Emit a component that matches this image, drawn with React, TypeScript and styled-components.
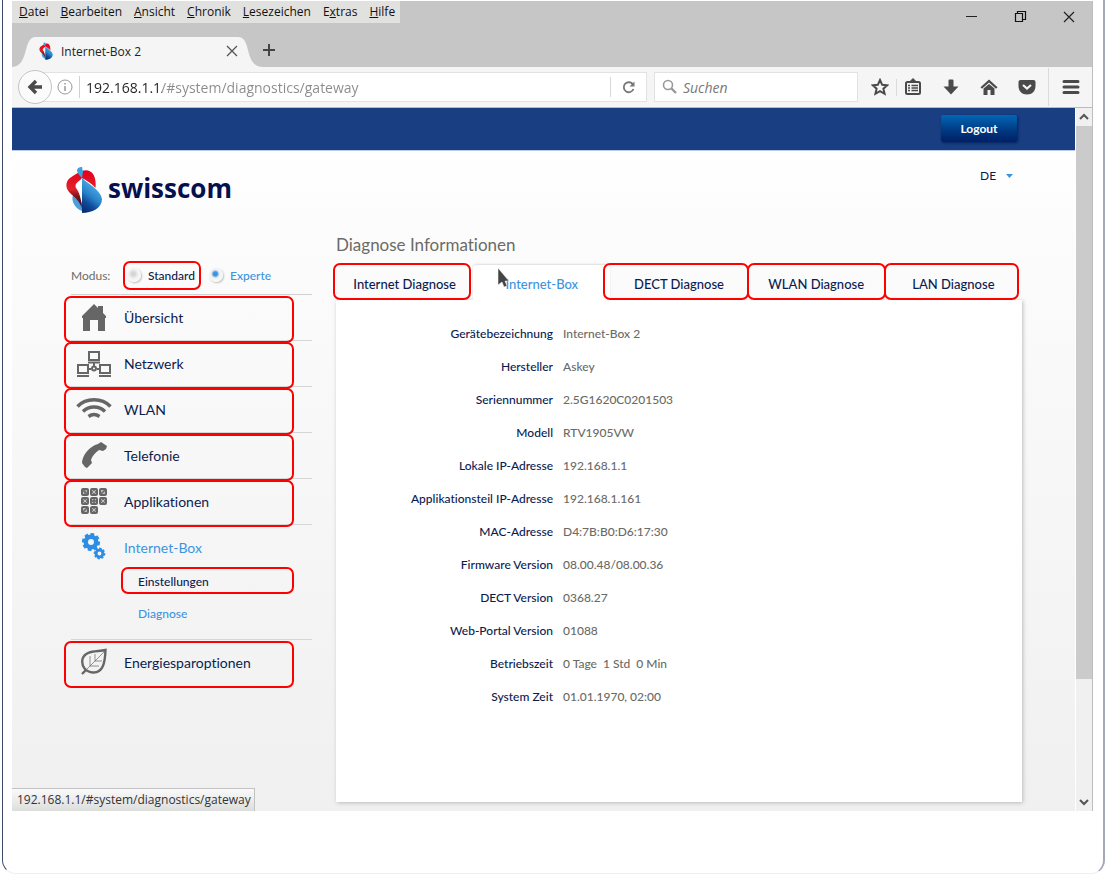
import React from "react";
import styled, { createGlobalStyle, css } from "styled-components";

const chromeFont = `"Open Sans", "Noto Sans", sans-serif`;
const pageFont = `Lato, "Open Sans", sans-serif`;
const navy = "#0c1c50";
const sky = "#3d94e0";
const grey = "#6b6b66";
const ink = "#4a4a4a";

const Global = createGlobalStyle`
  *, *::before, *::after { box-sizing: border-box; }
  body { margin: 0; background: #fff; font-family: ${chromeFont}; }
  button, input, select { font: inherit; color: inherit; margin: 0; }
  button { border: 0; background: none; padding: 0; cursor: pointer; }
  a { color: inherit; text-decoration: none; }
  ul { list-style: none; margin: 0; padding: 0; }
`;

/* Red call-out drawn over a clickable part */
const marked = css`
  position: relative;
  &::after {
    content: "";
    position: absolute;
    inset: var(--mark);
    border: 2px solid #f00;
    border-radius: 7px;
    pointer-events: none;
    z-index: 1;
  }
`;

const Frame = styled.div`
  min-height: 100vh;
  margin: 0 12px 0 2px;
  padding: 1px 10px 0 9px;
  border: 1px solid #3f4a66;
  border-right: 2px solid #a5a8b6;
  border-top: 0;
  border-bottom-color: #eee;
  border-radius: 0 0 14px 14px;
`;

const Browser = styled.div`
  position: relative;
  border-right: 1px solid #bdbdbd;
`;

const TitleBar = styled.header`
  background: #c6c6c6;
`;

const TitleRow = styled.div`
  display: flex;
  justify-content: space-between;
  align-items: flex-start;
  height: 36px;
`;

const MenuBar = styled.nav`
  display: flex;
  gap: 12px;
  height: 22px;
  padding: 0 5px 0 7px;
  background: #e1e2e0;
  font-size: 12px;
  line-height: 22px;
  color: #111;
`;

const WindowButtons = styled.div`
  display: flex;
  gap: 33px;
  padding: 7px 15px 0 0;
  svg { display: block; }
`;

const TabStrip = styled.div`
  display: flex;
  height: 30px;
`;

const Curve = styled.svg`
  display: block;
  width: 24px;
  height: 30px;
  flex: none;
`;

const BrowserTab = styled.div`
  display: flex;
  align-items: center;
  width: 202px;
  padding: 0 0 2px 3px;
  background: #f5f5f5;
  font-size: 12px;
  color: #222;
  svg { display: block; }
  span { flex: 1; padding-left: 8px; }
`;

const NewTab = styled.button`
  padding: 0 0 2px 0;
  width: 14px;
`;

const Toolbar = styled.div`
  display: flex;
  align-items: center;
  height: 41px;
  padding-left: 6px;
  background: #f5f5f5;
  border-bottom: 1px solid #b9bcc4;
`;

const BackButton = styled.button`
  display: grid;
  place-items: center;
  flex: none;
  width: 34px;
  height: 34px;
  border: 1px solid #c4c4c4;
  border-radius: 50%;
  background: #fbfbfb;
  z-index: 1;
`;

const AddressBar = styled.div`
  display: flex;
  align-items: center;
  flex: 1;
  height: 30px;
  margin-left: -18px;
  padding-left: 22px;
  border: 1px solid #e2e2e2;
  background: #fff;
`;

const UrlInput = styled.input`
  flex: 1;
  min-width: 0;
  height: 22px;
  margin-left: 6px;
  padding: 0 0 0 6px;
  border: 0;
  border-left: 1px solid #d0d0d0;
  outline: 0;
  font-size: 14px;
  background: linear-gradient(90deg, #222 82px, #8a8a8a 82px);
  -webkit-background-clip: text;
  background-clip: text;
  -webkit-text-fill-color: transparent;
`;

const ReloadButton = styled.button`
  display: grid;
  place-items: center;
  width: 36px;
  height: 20px;
  border-left: 1px solid #d8d8d8;
`;

const SearchBox = styled.label`
  display: flex;
  align-items: center;
  width: 204px;
  height: 30px;
  margin-left: 7px;
  padding-left: 7px;
  gap: 6px;
  border: 1px solid #e2e2e2;
  background: #fff;
  input {
    width: 150px;
    padding: 0;
    border: 0;
    outline: 0;
    font-size: 14px;
    font-style: italic;
  }
  input::placeholder { color: #777; opacity: 1; }
`;

const Tools = styled.div`
  display: flex;
  align-items: center;
  padding-left: 13px;
  color: ${ink};
  svg { display: block; }
`;

const Tool = styled.button<{ $gap: number }>`
  width: 18px;
  margin-right: ${(p) => p.$gap}px;
`;

const Divider = styled.i<{ $h: number }>`
  width: 1px;
  height: ${(p) => p.$h}px;
  margin-right: ${(p) => (p.$h > 20 ? 13 : 7)}px;
  background: #dadada;
`;

const Viewport = styled.div`
  display: flex;
  gap: 1px;
`;

const Page = styled.div`
  flex: 1;
  min-width: 0;
  font-family: ${pageFont};
  font-variant-ligatures: none;
  background: linear-gradient(#fff 43px, #fcfcfc 120px, #f0f0f0 100%);
`;

const ScrollBar = styled.div`
  display: flex;
  flex-direction: column;
  width: 16px;
  background: #f0f0f0;
  svg { display: block; margin: 0 auto; }
`;

const ScrollEnd = styled.button`
  height: 18px;
  flex: none;
`;

const ScrollThumb = styled.div`
  height: 553px;
  margin-bottom: auto;
  background: #cbcbcb;
`;

const TopBar = styled.div`
  display: flex;
  justify-content: flex-end;
  align-items: flex-start;
  height: 43px;
  padding: 7px 58px 0 0;
  background: #193f82;
  border-bottom: 1px solid #b9cbe8;
`;

const Logout = styled.button`
  width: 76px;
  height: 27px;
  border-radius: 2px;
  background: linear-gradient(#0067b5, #003780 60%, #001f66);
  box-shadow: 1px 1px 3px #061f5c;
  color: #fff;
  font-size: 12px;
  font-weight: 700;
`;

const Brand = styled.div`
  display: flex;
  justify-content: space-between;
  align-items: flex-start;
  padding: 15px 62px 0 54px;
`;

const Logo = styled.a`
  display: flex;
  align-items: flex-start;
  gap: 6px;
  color: #06104f;
  font-family: ${chromeFont};
  font-size: 26px;
  font-weight: 700;
  line-height: 44px;
`;

const Language = styled.label`
  display: flex;
  align-items: center;
  padding-top: 2px;
  font-size: 12px;
  color: ${navy};
  select {
    appearance: none;
    width: 26px;
    padding: 0;
    border: 0;
    background: none;
    outline: 0;
  }
`;

const Columns = styled.div`
  display: flex;
  gap: 24px;
  padding: 20px 53px 9px 59px;
`;

const Sidebar = styled.nav`
  flex: none;
  width: 241px;
  padding-top: 26px;
  color: ${navy};
`;

const Modus = styled.div`
  display: flex;
  align-items: center;
  height: 30px;
  margin-bottom: 4px;
  font-size: 12px;
`;

const ModusLabel = styled.span`
  width: 56px;
  color: ${grey};
`;

const Choice = styled.label<{ $on?: boolean }>`
  display: flex;
  align-items: center;
  gap: 7px;
  margin-right: 14px;
  font-weight: 500;
  color: ${(p) => (p.$on ? sky : navy)};
  --mark: -7px -6px -7px -4px;
  ${(p) => !p.$on && marked}
  input {
    appearance: none;
    width: 14px;
    height: 14px;
    margin: 0;
    border-radius: 50%;
    background: radial-gradient(circle at 45% 42%, #d6d6d6 2px, #ececec 4px, #f6f6f6 6px);
    box-shadow: 1px 1px 2px #bbb;
  }
  input:checked {
    background: radial-gradient(circle at 45% 42%, ${sky} 2px, #ececec 4px, #f6f6f6 6px);
  }
`;

const NavList = styled.ul`
  border-top: 1px solid #d0d0d0;
  > li { border-bottom: 1px solid #d6d6d6; }
  > li:last-child { border-bottom: 0; }
`;

const NavLink = styled.a<{ $active?: boolean }>`
  display: flex;
  align-items: center;
  height: 45px;
  font-size: 14px;
  color: ${(p) => (p.$active ? sky : navy)};
  --mark: 1px 18px -3px -7px;
  ${(p) => !p.$active && marked}
`;

const NavIcon = styled.span<{ $active?: boolean }>`
  display: grid;
  place-items: center;
  width: 46px;
  margin-right: 7px;
  color: ${(p) => (p.$active ? "#2c8ee6" : "#666")};
`;

const SubList = styled.ul`
  margin-top: -4px;
  padding-bottom: 9px;
`;

const SubLink = styled.a<{ $active?: boolean }>`
  display: block;
  padding-left: 67px;
  line-height: 32px;
  font-size: 12px;
  font-weight: 500;
  color: ${(p) => (p.$active ? sky : navy)};
  --mark: 1px 18px 4px 50px;
  ${(p) => !p.$active && marked}
`;

const Content = styled.main`
  flex: 1;
  min-width: 0;
`;

const Heading = styled.h1`
  margin: 0 0 9px;
  font-size: 17px;
  font-weight: 400;
  line-height: 22px;
  color: ${grey};
`;

const Tabs = styled.div`
  display: flex;
  height: 35px;
`;

const Tab = styled.button<{ $active?: boolean }>`
  flex: 1;
  position: relative;
  padding-top: 3px;
  font-size: 13px;
  font-weight: 500;
  color: ${(p) => (p.$active ? sky : navy)};
  ${(p) =>
    p.$active
      ? css`
          background: #fff;
          border-radius: 3px 3px 0 0;
          box-shadow: 0 -1px 2px #ddd;
        `
      : marked}
  --mark: -2px -1px 0 -1px;
  &:first-child { --mark: -2px 2px 0 -3px; }
  &:nth-child(3) { --mark: -2px -1px 0 -7px; }
  &:last-child { --mark: -2px 3px 0 -1px; }
`;

const Pointer = styled.svg`
  position: absolute;
  left: 24px;
  top: 2px;
`;

const Panel = styled.section`
  min-height: 502px;
  padding-top: 17px;
  background: #fff;
  box-shadow: 1px 1px 4px #bbb;
`;

const Facts = styled.table`
  border-collapse: collapse;
  font-size: 12px;
  th, td { height: 33px; padding: 0; font-weight: 500; }
  th { width: 217px; text-align: right; color: ${navy}; white-space: nowrap; }
  td { padding-left: 10px; color: ${grey}; white-space: pre; }
`;

const StatusTip = styled.div`
  position: absolute;
  left: 0;
  bottom: 0;
  height: 23px;
  padding: 0 3px 0 5px;
  border: 1px solid #c3c3c3;
  border-width: 1px 1px 0 0;
  background: linear-gradient(#fafafa, #dcdedc);
  font-size: 12px;
  line-height: 22px;
  color: #333;
`;

const Emblem = ({ width, height }: { width: number; height: number }) => (
  <svg width={width} height={height} viewBox="0 0 36 48" aria-hidden="true">
    <defs>
      <linearGradient id="drop" x1="0.7" y1="0.1" x2="0.3" y2="1">
        <stop offset="0" stopColor="#55b5ea" />
        <stop offset="0.5" stopColor="#2a82c9" />
        <stop offset="0.75" stopColor="#0f4c9a" />
        <stop offset="1" stopColor="#0a2f7a" />
      </linearGradient>
      <linearGradient id="heart" x1="0" y1="0" x2="0" y2="1">
        <stop offset="0" stopColor="#e2001a" />
        <stop offset="0.5" stopColor="#e3222a" />
        <stop offset="0.7" stopColor="#7a1518" />
        <stop offset="1" stopColor="#2a1020" />
      </linearGradient>
    </defs>
    <path d="M7 29 C5 34 8 42 16 45 V37 C13 33 11 31 7 29Z" fill="#4a9fdc" />
    <path d="M16 5 C24 2 31 8 29.500 22 C25 17 20 14 16 12 C13 16 8 17 10 22 C13 26 15 31 16 42 C13 35 10 32 5 28 C-2 22 0 15 4 12 C8 9 11 7 16 5Z" fill="url(#heart)" />
    <path d="M16 12 C21 17 35 24 36 33 C36 42 26 47 16 47Z" fill="url(#drop)" />
    <path d="M11 5 C11 2 13 1 16 1 L17 6 L16 12 C14 10 12 8 11 5Z" fill="#3aa3df" />
  </svg>
);

const HouseIcon = () => (
  <svg width="26" height="28" viewBox="0 0 26 28" fill="currentColor">
    <path d="M13 0 L17 4 V2 H22 V9 L25 12 V14 H24 V27 H17 V16 H9 V27 H2 V14 H1 V12Z" />
  </svg>
);

const NetworkIcon = () => (
  <svg width="36" height="28" viewBox="0 0 36 28" fill="none" stroke="currentColor" strokeWidth="2">
    <rect x="13" y="2" width="10" height="8" />
    <path d="M12 12.500H24M18 13V16M1 26H13M23 26H35M12 19H15M21 19H24" />
    <circle cx="18" cy="18.500" r="2" />
    <rect x="2" y="15" width="10" height="8" />
    <rect x="24" y="15" width="10" height="8" />
  </svg>
);

const WifiIcon = () => (
  <svg width="36" height="26" viewBox="0 0 36 26" fill="none" stroke="currentColor" strokeWidth="3.400">
    <path d="M1.500 9.500 C10 0.500 26 0.500 34.500 9.500" />
    <path d="M7 14.500 C13 8.500 23 8.500 29 14.500" />
    <path d="M12.500 19.500 C16 17 20 17 23.500 19.500" />
  </svg>
);

const PhoneIcon = () => (
  <svg width="26" height="28" viewBox="0 0 26 28" fill="currentColor">
    <path d="M17 2 L20 0 L26 4 L25 7 L22 9 L18 8 C14 11 11 14 10 18 L11 21 L6 26 L4 25 L1 21 C1 13 9 4 17 2Z" />
  </svg>
);

const AppsIcon = () => (
  <svg width="26" height="28" viewBox="0 0 26 28">
    {[0, 1, 2, 3, 4, 5, 6, 7].map((i) => (
      <g key={i} transform={`translate(${(i % 3) * 9} ${Math.floor(i / 3) * 9})`}>
        <rect x="1" y="1" width="6" height="6" rx="1" fill="#bbb" stroke="currentColor" strokeWidth="2" />
        {i % 2 ? (
          <circle cx="4" cy="4" r="1.500" fill="#eee" stroke="currentColor" strokeWidth="1" />
        ) : (
          <path d={i === 4 ? "M4 2V6M2 4H6" : i === 2 || i === 6 ? "M2 6L6 2" : "M2 3H4V5H6"} fill="none" stroke="currentColor" strokeWidth="1.500" />
        )}
      </g>
    ))}
  </svg>
);

const Gear = ({ x, y, r }: { x: number; y: number; r: number }) => (
  <g transform={`translate(${x} ${y})`}>
    <circle r={r * 0.58} fill="none" stroke="currentColor" strokeWidth={r * 0.5} />
    {[0, 45, 90, 135, 180, 225, 270, 315].map((a) => (
      <rect key={a} x={-r * 0.21} y={-r} width={r * 0.42} height={r * 0.35} fill="currentColor" transform={`rotate(${a + 10})`} />
    ))}
  </g>
);

const GearsIcon = () => (
  <svg width="26" height="30" viewBox="0 0 26 30">
    <Gear x={10} y={9} r={9} />
    <Gear x={18.5} y={20.5} r={5.8} />
  </svg>
);

const LeafIcon = () => (
  <svg width="26" height="30" viewBox="0 0 26 30" fill="none" stroke="currentColor">
    <path d="M24.500 2 C16 4 4 2 1.500 11 C0 19 5 24 12 24.500 C22 25 24 15 24.500 2Z" strokeWidth="2.400" />
    <path d="M1 26 L5 22" strokeWidth="2.400" />
    <path d="M5 22 L24 3 M9 18V8 M14 13V6 M9 18 H18 M14 13 H21" strokeWidth="1" opacity="0.7" />
  </svg>
);

const navItems = [
  { label: "Übersicht", icon: <HouseIcon /> },
  { label: "Netzwerk", icon: <NetworkIcon /> },
  { label: "WLAN", icon: <WifiIcon /> },
  { label: "Telefonie", icon: <PhoneIcon /> },
  { label: "Applikationen", icon: <AppsIcon /> },
  { label: "Internet-Box", icon: <GearsIcon />, active: true, sub: ["Einstellungen", "Diagnose"] },
  { label: "Energiesparoptionen", icon: <LeafIcon /> },
];

const tabs = ["Internet Diagnose", "Internet-Box", "DECT Diagnose", "WLAN Diagnose", "LAN Diagnose"];

const facts = [
  ["Gerätebezeichnung", "Internet-Box 2"],
  ["Hersteller", "Askey"],
  ["Seriennummer", "2.5G1620C0201503"],
  ["Modell", "RTV1905VW"],
  ["Lokale IP-Adresse", "192.168.1.1"],
  ["Applikationsteil IP-Adresse", "192.168.1.161"],
  ["MAC-Adresse", "D4:7B:B0:D6:17:30"],
  ["Firmware Version", "08.00.48/08.00.36"],
  ["DECT Version", "0368.27"],
  ["Web-Portal Version", "01088"],
  ["Betriebszeit", "0 Tage  1 Std  0 Min"],
  ["System Zeit", "01.01.1970, 02:00"],
];

const menus = [
  ["", "D", "atei"],
  ["", "B", "earbeiten"],
  ["", "A", "nsicht"],
  ["", "C", "hronik"],
  ["", "L", "esezeichen"],
  ["E", "x", "tras"],
  ["", "H", "ilfe"],
];

const BrowserChrome = () => (
  <>
    <TitleBar>
      <TitleRow>
        <MenuBar>
          {menus.map(([before, key, after]) => (
            <a href="#menu" key={key}>
              {before}
              <u>{key}</u>
              {after}
            </a>
          ))}
        </MenuBar>
        <WindowButtons>
          <button aria-label="Minimieren">
            <svg width="16" height="16" viewBox="0 0 16 16"><path d="M3 8.500H14" stroke="#222" /></svg>
          </button>
          <button aria-label="Wiederherstellen">
            <svg width="16" height="16" viewBox="0 0 16 16" fill="none" stroke="#111" strokeWidth="1.200">
              <path d="M3.500 5.500H10.500V13.500H3.500ZM5.500 5.500V3.500H13.500V11.500H10.500" />
            </svg>
          </button>
          <button aria-label="Schliessen">
            <svg width="16" height="16" viewBox="0 0 16 16"><path d="M3 4L13 14M13 4L3 14" stroke="#222" strokeWidth="1.200" /></svg>
          </button>
        </WindowButtons>
      </TitleRow>
      <TabStrip>
        <Curve viewBox="0 0 24 30"><path d="M0 30 C18 29 10 0 24 0 V30Z" fill="#f5f5f5" /></Curve>
        <BrowserTab>
          <Emblem width={14} height={18} />
          <span>Internet-Box 2</span>
          <button aria-label="Tab schliessen">
            <svg width="12" height="12" viewBox="0 0 12 12"><path d="M1 1L11 11M11 1L1 11" stroke="#555" strokeWidth="1.300" /></svg>
          </button>
        </BrowserTab>
        <Curve viewBox="0 0 24 30"><path d="M24 30 C6 29 14 0 0 0 V30Z" fill="#f5f5f5" /></Curve>
        <NewTab aria-label="Neuer Tab">
          <svg width="14" height="14" viewBox="0 0 14 14"><path d="M7 1V13M1 7H13" stroke="#444" strokeWidth="2" /></svg>
        </NewTab>
      </TabStrip>
    </TitleBar>
    <Toolbar>
      <BackButton aria-label="Zurück">
        <svg width="16" height="16" viewBox="0 0 16 16" fill="none" stroke={ink} strokeWidth="3.400"><path d="M9 2L3 8L9 14M3 8H15" /></svg>
      </BackButton>
      <AddressBar>
        <svg width="16" height="16" viewBox="0 0 16 16" fill="none" stroke="#999">
          <circle cx="8" cy="8" r="7" />
          <path d="M8 7V12M8 4V5.500" strokeWidth="1.500" />
        </svg>
        <UrlInput aria-label="Adresse" defaultValue="192.168.1.1/#system/diagnostics/gateway" />
        <ReloadButton aria-label="Neu laden">
          <svg width="14" height="14" viewBox="0 0 14 14" fill="none" stroke="#777" strokeWidth="1.800">
            <path d="M11 4.500A5 5 0 1 0 11.500 9" />
            <path d="M12.500 1.500V6.500H7.500Z" fill="#777" stroke="none" />
          </svg>
        </ReloadButton>
      </AddressBar>
      <SearchBox>
        <svg width="15" height="16" viewBox="0 0 15 16" fill="none" stroke="#999">
          <circle cx="6" cy="6" r="4.500" strokeWidth="1.600" />
          <path d="M9.500 9.500L14 14" strokeWidth="2.400" />
        </svg>
        <input placeholder="Suchen" aria-label="Suchen" />
      </SearchBox>
      <Tools>
        <Tool $gap={7} aria-label="Lesezeichen setzen">
          <svg width="18" height="18" viewBox="0 0 18 18" fill="none" stroke="currentColor" strokeWidth="2">
            <path d="M9 2L11.200 6.800L16.200 7.300L12.400 10.700L13.600 15.800L9 13.100L4.400 15.800L5.600 10.700L1.800 7.300L6.800 6.800Z" />
          </svg>
        </Tool>
        <Divider $h={17} />
        <Tool $gap={20} aria-label="Lesezeichen anzeigen">
          <svg width="18" height="18" viewBox="0 0 18 18" fill="none" stroke="currentColor">
            <rect x="2" y="4" width="14" height="12" rx="1.500" strokeWidth="2" />
            <path d="M5.500 4L9 0.500L12.500 4Z" fill="currentColor" />
            <path d="M4 7.500H6M7.500 7.500H14M4 10H6M7.500 10H14M4 12.500H6M7.500 12.500H14" strokeWidth="1.300" />
          </svg>
        </Tool>
        <Tool $gap={20} aria-label="Downloads">
          <svg width="18" height="18" viewBox="0 0 18 18" fill="currentColor">
            <path d="M6.500 2.500Q6.500 1.500 7.500 1.500H10.500Q11.500 1.500 11.500 2.500V8.500H16.500L9 16.500L1.500 8.500H6.500Z" />
          </svg>
        </Tool>
        <Tool $gap={20} aria-label="Startseite">
          <svg width="18" height="18" viewBox="0 0 18 18" fill="currentColor">
            <path d="M9 1.500L17.500 9.200L16 10.700L9 4.400L2 10.700L0.500 9.200Z" />
            <path d="M9 6L14.500 10.500V17H10.500V12H7.500V17H3.500V10.500Z" />
          </svg>
        </Tool>
        <Tool $gap={12} aria-label="Pocket">
          <svg width="18" height="18" viewBox="0 0 18 18">
            <path d="M2.500 2H15.500C17 2 17.500 3 17.500 4V8C17.500 13 14 16.500 9 16.500S0.500 13 0.500 8V4C0.500 3 1 2 2.500 2Z" fill="currentColor" />
            <path d="M5 7L9 10.500L13 7" fill="none" stroke="#f5f5f5" strokeWidth="2.200" />
          </svg>
        </Tool>
        <Divider $h={38} />
        <Tool $gap={12} aria-label="Menü">
          <svg width="18" height="18" viewBox="0 0 18 18">
            <path d="M2 3.500H16M2 9H16M2 14.500H16" stroke="currentColor" strokeWidth="3" strokeLinecap="round" />
          </svg>
        </Tool>
      </Tools>
    </Toolbar>
  </>
);

export default function App() {
  return (
    <Frame>
      <Global />
      <Browser>
        <BrowserChrome />
        <Viewport>
          <Page>
            <TopBar>
              <Logout>Logout</Logout>
            </TopBar>
            <Brand>
              <Logo href="#home">
                <Emblem width={36} height={48} />
                swisscom
              </Logo>
              <Language>
                <select aria-label="Sprache" defaultValue="DE">
                  <option>DE</option>
                </select>
                <svg width="7" height="4" viewBox="0 0 7 4"><path d="M0 0H7L3.500 4Z" fill={sky} /></svg>
              </Language>
            </Brand>
            <Columns>
              <Sidebar>
                <Modus role="radiogroup" aria-label="Modus">
                  <ModusLabel>Modus:</ModusLabel>
                  <Choice>
                    <input type="radio" name="modus" />
                    Standard
                  </Choice>
                  <Choice $on>
                    <input type="radio" name="modus" defaultChecked />
                    Experte
                  </Choice>
                </Modus>
                <NavList>
                  {navItems.map((item) => (
                    <li key={item.label}>
                      <NavLink href="#nav" $active={item.active}>
                        <NavIcon $active={item.active}>{item.icon}</NavIcon>
                        {item.label}
                      </NavLink>
                      {item.sub && (
                        <SubList>
                          {item.sub.map((s) => (
                            <li key={s}>
                              <SubLink href="#sub" $active={s === "Diagnose"}>{s}</SubLink>
                            </li>
                          ))}
                        </SubList>
                      )}
                    </li>
                  ))}
                </NavList>
              </Sidebar>
              <Content>
                <Heading>Diagnose Informationen</Heading>
                <Tabs role="tablist">
                  {tabs.map((t) => {
                    const active = t === "Internet-Box";
                    return (
                      <Tab key={t} role="tab" aria-selected={active} $active={active}>
                        {t}
                        {active && (
                          <Pointer width="14" height="22" viewBox="0 0 14 22">
                            <path d="M1 1V18L5 15L7 20L10 19L8 14H12Z" fill="#444" stroke="#fff" strokeWidth="0.500" />
                          </Pointer>
                        )}
                      </Tab>
                    );
                  })}
                </Tabs>
                <Panel>
                  <Facts>
                    <tbody>
                      {facts.map(([k, v]) => (
                        <tr key={k}>
                          <th scope="row">{k}</th>
                          <td>{v}</td>
                        </tr>
                      ))}
                    </tbody>
                  </Facts>
                </Panel>
              </Content>
            </Columns>
          </Page>
          <ScrollBar>
            <ScrollEnd aria-label="Nach oben">
              <svg width="10" height="8" viewBox="0 0 10 8" fill="none" stroke="#555" strokeWidth="2"><path d="M1 6L5 2L9 6" /></svg>
            </ScrollEnd>
            <ScrollThumb />
            <ScrollEnd aria-label="Nach unten">
              <svg width="10" height="8" viewBox="0 0 10 8" fill="none" stroke="#555" strokeWidth="2"><path d="M1 2L5 6L9 2" /></svg>
            </ScrollEnd>
          </ScrollBar>
        </Viewport>
        <StatusTip>192.168.1.1/#system/diagnostics/gateway</StatusTip>
      </Browser>
    </Frame>
  );
}
